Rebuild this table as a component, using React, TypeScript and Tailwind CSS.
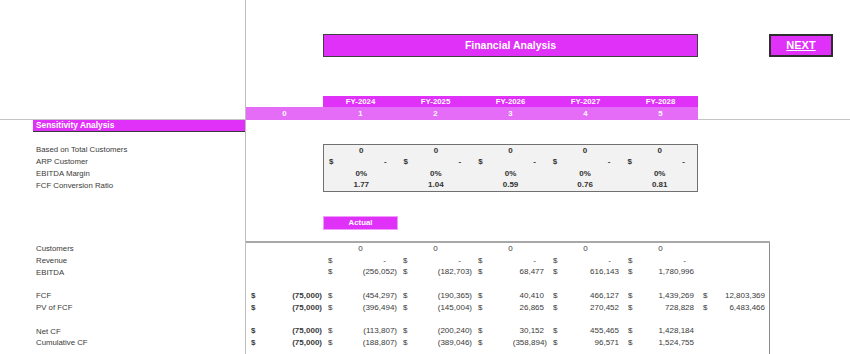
const GRID = 'grid grid-cols-[246px_77px_75px_75px_75px_75px_75px_72px_1fr]';
const LINE = 'border-r border-[#bdbdbd]';
const MAG = 'bg-[#df31f8]';
const MAG_LT = 'bg-[#e56cf6]';

const Acct = ({ v, bold }: { v: string; bold?: boolean }) => {
  const pad = v === '-' ? 'pr-[12px]' : v.endsWith(')') ? 'pr-[1px]' : 'pr-[4px]';
  return (
    <div className={`flex h-full items-center justify-between pl-[5px] ${pad} ${bold ? 'font-bold' : ''}`}>
      <span>$</span>
      <span>{v}</span>
    </div>
  );
};

const Mid = ({ v }: { v: string }) => <div className="flex h-full items-center justify-center">{v}</div>;

type Cell = string | null;

// each row: label, col0 .. col6; '$x' accounting cell, 'Bx' bold accounting, '#x' centered
const bottomRows: [string, Cell[]][] = [
  ['Customers', [null, '#0', '#0', '#0', '#0', '#0', null]],
  ['Revenue', [null, '$-', '$-', '$-', '$-', '$-', null]],
  ['EBITDA', [null, '$(256,052)', '$(182,703)', '$68,477', '$616,143', '$1,780,996', null]],
  ['', [null, null, null, null, null, null, null]],
  ['FCF', ['B(75,000)', '$(454,297)', '$(190,365)', '$40,410', '$466,127', '$1,439,269', '$12,803,369']],
  ['PV of FCF', ['B(75,000)', '$(396,494)', '$(145,004)', '$26,865', '$270,452', '$728,828', '$6,483,466']],
  ['', [null, null, null, null, null, null, null]],
  ['Net CF', ['B(75,000)', '$(113,807)', '$(200,240)', '$30,152', '$455,465', '$1,428,184', null]],
  ['Cumulative CF', ['B(75,000)', '$(188,807)', '$(389,046)', '$(358,894)', '$96,571', '$1,524,755', null]],
];

const renderCell = (c: Cell) => {
  if (!c) return null;
  if (c[0] === '$') return <Acct v={c.slice(1)} />;
  if (c[0] === 'B') return <Acct v={c.slice(1)} bold />;
  return <Mid v={c.slice(1)} />;
};

const boxRows: string[][] = [
  ['#0', '#0', '#0', '#0', '#0'],
  ['$-', '$-', '$-', '$-', '$-'],
  ['#0%', '#0%', '#0%', '#0%', '#0%'],
  ['#1.77', '#1.04', '#0.59', '#0.76', '#0.81'],
];
const boxLabels = ['Based on Total Customers', 'ARP Customer', 'EBITDA Margin', 'FCF Conversion Ratio'];

export default function App() {
  return (
    <div className="flex h-[354px] w-[850px] flex-col overflow-hidden bg-white font-['Liberation_Sans',Arial,sans-serif] text-[#3a3a3a]">
      {/* top blank */}
      <div className={`${GRID} h-[34px] shrink-0`}>
        <div className={LINE} />
      </div>

      {/* title banner + next */}
      <div className={`${GRID} h-[23px] shrink-0`}>
        <div className={LINE} />
        <div />
        <div className={`col-span-5 flex items-center justify-center border border-[#404040] ${MAG} text-[10.5px] font-bold text-white`}>
          Financial Analysis
        </div>
        <div className="col-span-2 flex justify-end pr-[17px]">
          <div className={`flex h-full w-[64px] items-center justify-center border-2 border-[#2e2e2e] ${MAG} text-[11px] font-bold text-white underline`}>
            NEXT
          </div>
        </div>
      </div>

      <div className={`${GRID} h-[39px] shrink-0`}>
        <div className={LINE} />
      </div>

      {/* FY header */}
      <div className={`${GRID} h-[11px] shrink-0 text-[7.8px] font-bold text-white`}>
        <div className={LINE} />
        <div />
        {['FY-2024', 'FY-2025', 'FY-2026', 'FY-2027', 'FY-2028'].map((y) => (
          <div key={y} className={`flex items-center justify-center ${MAG} leading-none`}>
            {y}
          </div>
        ))}
      </div>

      {/* period index */}
      <div className={`${GRID} h-[13px] shrink-0 text-[7.8px] font-bold text-white`}>
        <div className={`${LINE} border-b border-b-[#c4c4c4]`} />
        {['0', '1', '2', '3', '4', '5'].map((n) => (
          <div key={n} className={`flex items-center justify-center ${MAG_LT} leading-none`}>
            {n}
          </div>
        ))}
        <div className="col-span-2 border-b border-[#c4c4c4]" />
      </div>

      {/* sensitivity title */}
      <div className={`${GRID} h-[12px] shrink-0`}>
        <div className={`${LINE} pl-[33px]`}>
          <div className={`flex h-full items-center border-b border-[#3a3a3a] ${MAG} pl-[3px] text-[8.4px] font-bold leading-none text-white`}>
            Sensitivity Analysis
          </div>
        </div>
      </div>

      <div className={`${GRID} h-[12px] shrink-0`}>
        <div className={LINE} />
      </div>

      {/* sensitivity box */}
      <div className={`${GRID} h-[48px] shrink-0 text-[7.8px]`}>
        <div className={`${LINE} flex flex-col pl-[36px]`}>
          {boxLabels.map((l) => (
            <div key={l} className="flex h-[12px] items-center leading-none">
              {l}
            </div>
          ))}
        </div>
        <div />
        <div className="col-span-5 flex flex-col border-[1.5px] border-[#707070] bg-[#f2f2f2] text-[8px] font-bold text-[#333]">
          {boxRows.map((r, i) => (
            <div key={i} className="grid flex-1 grid-cols-5 leading-none">
              {r.map((c, j) => (
                <div key={j}>{renderCell(c)}</div>
              ))}
            </div>
          ))}
        </div>
      </div>

      <div className={`${GRID} h-[24px] shrink-0`}>
        <div className={LINE} />
      </div>

      {/* actual tag */}
      <div className={`${GRID} h-[14px] shrink-0`}>
        <div className={LINE} />
        <div />
        <div className={`flex items-center justify-center border border-[#ef9cfb] ${MAG} text-[7.8px] font-bold leading-none text-white`}>
          Actual
        </div>
      </div>

      <div className={`${GRID} h-[11px] shrink-0`}>
        <div className={LINE} />
      </div>

      {/* cash flow table */}
      <div className={`${GRID} h-[2px] shrink-0`}>
        <div className={LINE} />
        <div className="col-span-7 bg-[#a8a8a8]" />
      </div>
      {bottomRows.map(([label, cells], i) => (
        <div key={i} className={`${GRID} h-[11.8px] shrink-0 leading-none`}>
          <div className={`${LINE} flex items-center pl-[36px] text-[7.8px]`}>{label}</div>
          {cells.map((c, j) => (
            <div key={j} className={`text-[8px] ${j === 6 ? 'border-r border-[#8a8a8a]' : ''}`}>
              {renderCell(c)}
            </div>
          ))}
        </div>
      ))}
      <div className={`${GRID} min-h-0 flex-1`}>
        <div className={LINE} />
        <div className="col-span-6" />
        <div className="border-r border-[#8a8a8a]" />
      </div>
    </div>
  );
}
